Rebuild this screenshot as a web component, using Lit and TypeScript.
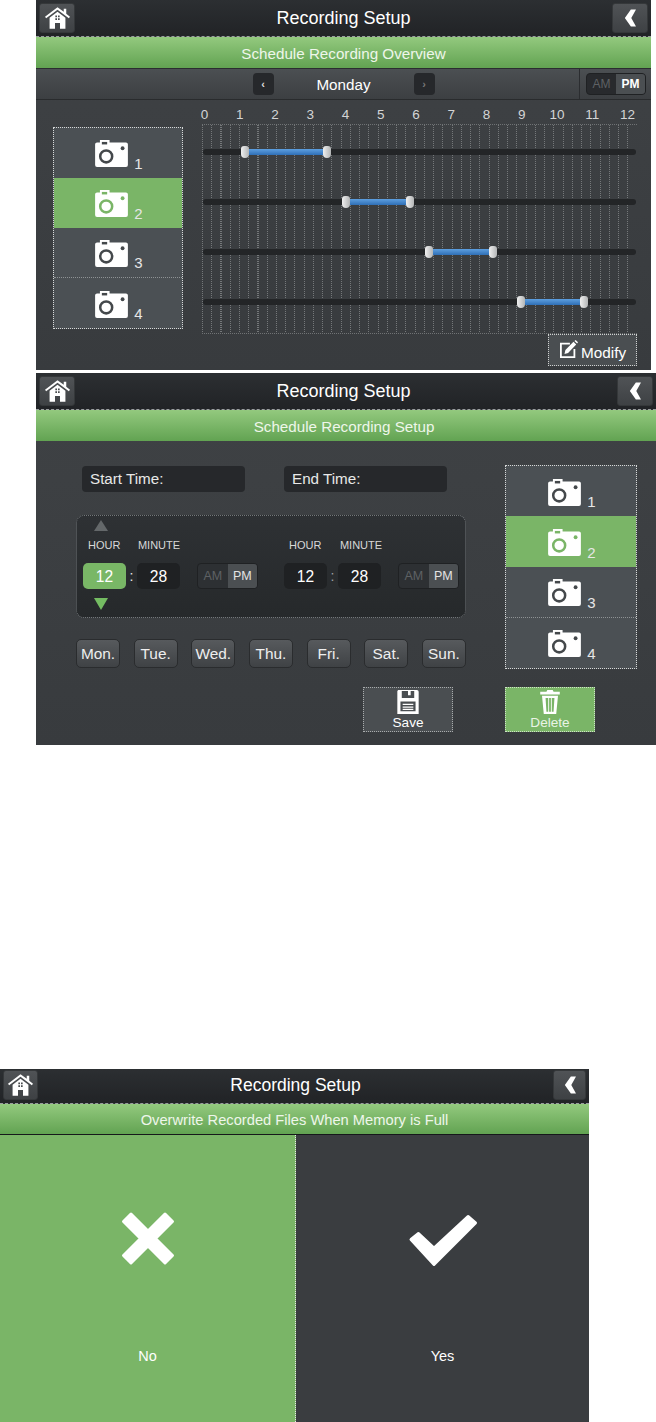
import { LitElement, html, css } from "lit";
import { customElement } from "lit/decorators.js";

const home = html`<svg class="ico-home" viewBox="0 0 30 26"><path fill="#fff" d="M15 0 L22.5 5.6 V2 H25.5 V8 L30 11.6 L28.6 13.4 L15 3.2 L1.4 13.4 L0 11.6 Z"/><path fill="#fff" fill-rule="evenodd" d="M15 5.6 L24.5 12.6 V26 H18 V19 H12 V26 H5.5 V12.6 Z M12.4 10 V12.2 H14.4 V10 Z M15.6 10 V12.2 H17.6 V10 Z M12.4 13.2 V15.4 H14.4 V13.2 Z M15.6 13.2 V15.4 H17.6 V13.2 Z"/></svg>`;
const backIco = html`<svg class="ico-back" viewBox="0 0 14 20"><path fill="#fff" d="M8 0 H14 L8.5 10 L14 20 H8 L1 10 Z"/></svg>`;
const camera = (sel: boolean) => {
  const c = sel ? "#7ab567" : "#44484b";
  return html`<svg class="ico-cam" viewBox="0 0 34 28"><path fill="#fff" d="M5 0 H15 V2.5 H32 Q34 2.5 34 4.5 V26 Q34 28 32 28 H2 Q0 28 0 26 V4.5 Q0 2.5 2 2.5 H5 Z"/><rect x="7" y="2" width="5.5" height="2.6" fill="${c}"/><circle cx="11.5" cy="17" r="6.2" fill="none" stroke="${c}" stroke-width="2.6"/><circle cx="28.5" cy="8.5" r="2" fill="${c}"/></svg>`;
};
const modifyIco = html`<svg class="ico-mod" viewBox="0 0 20 20"><path fill="none" stroke="#fff" stroke-width="2" d="M16 10 V19 H1 V4 H11"/><path fill="#fff" d="M5 15.5 L6 11 L15 2 L18 5 L9 14.5 Z M16 1 L17.4 0 L20 2.6 L19 4 Z"/></svg>`;
const saveIco = html`<svg class="ico-act" viewBox="0 0 24 27"><path fill="#fff" fill-rule="evenodd" d="M1 0 H22 Q24 0 24 2 V27 H0 V1 Z M5 1 V9 H19 V1 H15 V6 H12 V1 Z M3.5 13 V24 H20.5 V13 Z"/><path fill="#fff" d="M6 15.5 H18 V17 H6 Z M6 18.5 H18 V20 H6 Z M6 21 H18 V22.5 H6 Z"/></svg>`;
const trashIco = html`<svg class="ico-act" viewBox="0 0 22 27"><path fill="#fff" fill-rule="evenodd" d="M8 0 H14 L15 2 H22 V5 H0 V2 H7 Z M2 6.5 H20 L18 27 H4 Z M6 9 L7 24.5 H9 V9 Z M10 9 V24.5 H12 V9 Z M13 9 V24.5 H15 L16 9 Z"/></svg>`;

const cams = [1, 2, 3, 4];
const bars: [number, number][] = [[245, 327], [346, 410], [429, 493], [521, 584]];
const hours = [0, 1, 2, 3, 4, 5, 6, 7, 8, 9, 10, 11, 12];
const days = ["Mon.", "Tue.", "Wed.", "Thu.", "Fri.", "Sat.", "Sun."];

@customElement("app-root")
export class AppRoot extends LitElement {
  static styles = css`
    :host { display: block; width: 656px; height: 1422px; background: #fff; overflow: hidden;
      font-family: "Liberation Sans", Arial, sans-serif; color: #fff; }
    * { box-sizing: border-box; }
    svg { display: block; }

    .screen { background: linear-gradient(#3f4245, #383b3e); display: flex; flex-direction: column; }
    .s1 { margin-left: 36px; width: 615px; height: 370px; }
    .s2 { margin: 3px 0 0 36px; width: 620px; height: 372px; }
    .s3 { margin-top: 324px; width: 589px; height: 353px; }

    .bar { height: 37px; padding: 3px 3px 0; background: linear-gradient(#2c2f32, #212326);
      display: grid; grid-template-columns: auto 1fr auto; border-bottom: 1px dashed #9a9d9f; flex: none; }
    .s3 .bar { height: 35px; padding: 1px 3px 0; }
    .btn { width: 36px; height: 30px; border-radius: 3px; background: linear-gradient(#505356, #3e4144);
      border: 1px solid #35383a; display: flex; align-items: center; justify-content: center; }
    .s3 .btn { width: 35px; }
    .s3 .btn.back { width: 33px; }
    .ico-home { width: 25px; height: 22px; }
    .ico-back { width: 12px; height: 18px; }
    .title { font-size: 18px; text-align: center; line-height: 31px; }
    .s2 .title { padding-right: 5px; }
    .s3 .title { font-size: 17.5px; }

    .green { height: 32px; flex: none; background: linear-gradient(#93c97e, #62a352); border-bottom: 1px solid #2b2e30;
      text-align: center; font-size: 15.2px; line-height: 33px; color: #eef6ea; }
    .s2 .green { height: 31px; padding-right: 4px; border-bottom: 0; }
    .s3 .green { height: 31px; font-size: 14.7px; border-bottom: 1px solid #15181a; }

    .sub { height: 31px; flex: none; background: linear-gradient(#4b4f52, #3c3f42); border-bottom: 1px solid #292b2d;
      display: grid; grid-template-columns: 1fr 72px; }
    .nav { display: flex; align-items: center; justify-content: center; padding-left: 72px; }
    .nav .day { width: 140px; text-align: center; font-size: 15.2px; }
    .arrow { width: 21px; height: 22px; border-radius: 4px; background: #26282b; display: flex;
      align-items: center; justify-content: center; font-size: 11px; font-weight: bold; color: #ddd; }
    .arrow.dim { color: #777; }
    .ampm-wrap { border-left: 1px solid #2b2d30; padding: 4px 0 0 6px; }
    .ampm { width: 60px; height: 22px; display: flex; border-radius: 4px; overflow: hidden; background: #282a2d;
      border: 1px solid #1f2123; font-size: 12px; }
    .ampm span { flex: 1; display: flex; align-items: center; justify-content: center; color: #5e6164; }
    .ampm span.on { color: #fff; background: #4b4f52; }
    .s1 .ampm span.on { font-weight: bold; }
    .s2 .ampm { height: 26px; width: 61px; font-size: 12.5px; background: #2d3033; }
    .s2 .ampm span.on { color: #e4e4e4; }

    .ov { flex: 1; display: grid; grid-template-columns: 130px 435px; column-gap: 19px; padding: 8px 0 0 17px; }
    .cams { border: 1px dotted #d6d8d8; display: flex; flex-direction: column; background: #4b5054; align-self: start; }
    .s1 .cams { margin-top: 19px; height: 202px; }
    .s2 .cams { width: 132px; height: 204px; }
    .cam { flex: 1; display: flex; align-items: center; justify-content: center; padding: 2px 0 0 2px; gap: 6px;
      font-size: 15px; color: #e6e6e6; }
    .cam + .cam { border-top: 1px dotted #8e9294; }
    .cam.sel { background: #7ab567; border-top: 0; }
    .cam.sel + .cam { border-top: 0; }
    .cam b { font-weight: normal; align-self: flex-end; margin-bottom: 6px; }
    .ico-cam { width: 33px; height: 27px; }

    .tl { display: flex; flex-direction: column; }
    .hours { display: grid; grid-template-columns: repeat(13, 35.25px); margin-left: -15px; font-size: 13.5px; line-height: 14px;
      text-align: center; color: #d4d5d6; height: 16px; }
    .grid { position: relative; height: 210px; border-top: 1px dotted #6f7274; border-bottom: 1px dotted #6f7274;
      padding-top: 24px; display: flex; flex-direction: column; gap: 44px; }
    .grid::before { content: ""; position: absolute; inset: 0;
      background: repeating-linear-gradient(90deg, #75787a 0 1px, transparent 1px 9.25px);
      -webkit-mask-image: repeating-linear-gradient(#000 0 1px, transparent 1px 2px);
      mask-image: repeating-linear-gradient(#000 0 1px, transparent 1px 2px); }
    .track { position: relative; height: 6px; margin: 0 1px; border-radius: 3px; background: #232527; }
    .fill { position: absolute; top: 0; height: 6px; background: linear-gradient(#5d9fe0, #2f6fb6); }
    .thumb { position: absolute; top: -3px; width: 8px; height: 12px; border-radius: 3px 3px 4px 4px; margin-left: -4px;
      background: linear-gradient(90deg, #f0f0f0, #b3b5b6); }

    .foot { height: 37px; flex: none; display: flex; justify-content: flex-end; padding: 0 14px 4px 0; }
    .modify { width: 89px; height: 32px; border: 1px dotted #cfd1d1; background: #4a4e51; display: flex; align-items: center;
      gap: 3px; padding-left: 11px; font-size: 15.3px; }
    .modify span { margin-top: 6px; }
    .ico-mod { width: 18px; height: 18px; margin-top: -3px; }

    .setup { flex: 1; display: grid; grid-template-columns: 390px 132px; column-gap: 39px; padding: 24px 0 0 40px; align-content: start; }
    .left { display: flex; flex-direction: column; }
    .fields { display: flex; gap: 39px; padding-left: 6px; height: 26px; margin-top: 1px; }
    .field { width: 163px; height: 26px; background: #26282b; border-radius: 4px; font-size: 15.2px; line-height: 26px; padding-left: 8px;
      color: #e8e8e8; }
    .clock { height: 103px; margin-top: 23px; border-radius: 8px; border: 1px dotted #73777a; background: linear-gradient(#2e3134, #26292b);
      padding: 4px 0 0 6px; }
    .tri-up { width: 0; border: 7px solid transparent; border-top: 0; border-bottom: 11px solid #64686a; margin-left: 11px; }
    .tri-down { width: 0; border: 7px solid transparent; border-bottom: 0; border-top: 12px solid #74bc62; margin: 9px 0 0 11px; }
    .labels { display: grid; grid-template-columns: 54px 44px 103px 55px 44px; font-size: 11px; line-height: 14px; margin-top: 7px; color: #d8d8d8; height: 14px; }
    .labels span { text-align: center; }
    .labels .l { text-align: left; padding-left: 5px; }
    .vals { display: flex; align-items: center; margin-top: 11px; height: 26px; }
    .val { width: 43px; height: 26px; background: #1f2123; border-radius: 5px; text-align: center; font-size: 15.6px; line-height: 27px; }
    .val.sel { background: #79b766; }
    .colon { width: 11px; text-align: center; font-size: 14px; color: #e8e8e8; }
    .colon.dim { color: #9fa2a4; }
    .vals .ampm { margin-left: 17px; }
    .vals .gap { width: 26px; }
    .days { display: flex; justify-content: space-between; margin-top: 21px; }
    .dbtn { width: 44px; height: 29px; border-radius: 5px; border: 1px solid #2a2c2e; background: linear-gradient(#575a5d, #3f4245);
      font-size: 15.4px; text-align: center; line-height: 27px; color: #eee; }
    .acts { display: flex; gap: 52px; padding-left: 287px; grid-column: 1 / 3; margin-top: 18px; }
    .act { width: 90px; height: 45px; border: 1px dotted #a9acad; background: #4a4e51; display: flex; flex-direction: column; align-items: center;
      font-size: 13.6px; line-height: 14px; padding-top: 2px; gap: 2px; }
    .act.sel { background: #7ab567; border-color: #cfe2c8; color: #e9f3e5; }
    .ico-act { width: 22px; height: 24px; }

    .choice { flex: 1; display: flex; }
    .opt { flex: 1; display: flex; flex-direction: column; align-items: center; font-size: 14.5px; background: #3a3d40; }
    .opt.sel { background: #7ab567; border-right: 1px dotted #e8e8e8; flex: 0 0 296px; }
    .opt svg { margin-top: 77px; height: 53px; overflow: visible; }
    .opt span { margin-top: 83px; line-height: 17px; }
  `;

  private topBar(title: string) {
    return html`<div class="bar"><div class="btn">${home}</div><div class="title">${title}</div><div class="btn back">${backIco}</div></div>`;
  }

  private camList() {
    return html`<div class="cams">${cams.map((n) => html`<div class="cam ${n === 2 ? "sel" : ""}">${camera(n === 2)}<b>${n}</b></div>`)}</div>`;
  }

  private ampm() {
    return html`<div class="ampm"><span>AM</span><span class="on">PM</span></div>`;
  }

  render() {
    return html`
      <section class="screen s1">
        ${this.topBar("Recording Setup")}
        <div class="green">Schedule Recording Overview</div>
        <div class="sub">
          <div class="nav"><div class="arrow">‹</div><div class="day">Monday</div><div class="arrow dim">›</div></div>
          <div class="ampm-wrap">${this.ampm()}</div>
        </div>
        <div class="ov">
          ${this.camList()}
          <div class="tl">
            <div class="hours">${hours.map((h) => html`<span>${h}</span>`)}</div>
            <div class="grid">
              ${bars.map(([a, b]) => html`<div class="track">
                <div class="fill" style="left:${a - 203}px;width:${b - a}px"></div>
                <div class="thumb" style="left:${a - 203}px"></div>
                <div class="thumb" style="left:${b - 203}px"></div>
              </div>`)}
            </div>
          </div>
        </div>
        <div class="foot"><div class="modify">${modifyIco}<span>Modify</span></div></div>
      </section>

      <section class="screen s2">
        ${this.topBar("Recording Setup")}
        <div class="green">Schedule Recording Setup</div>
        <div class="setup">
          <div class="left">
            <div class="fields"><div class="field">Start Time:</div><div class="field">End Time:</div></div>
            <div class="clock">
              <div class="tri-up"></div>
              <div class="labels"><span class="l">HOUR</span><span>MINUTE</span><span></span><span class="l">HOUR</span><span>MINUTE</span></div>
              <div class="vals">
                <div class="val sel">12</div><div class="colon">:</div><div class="val">28</div>${this.ampm()}
                <div class="gap"></div>
                <div class="val">12</div><div class="colon dim">:</div><div class="val">28</div>${this.ampm()}
              </div>
              <div class="tri-down"></div>
            </div>
            <div class="days">${days.map((d) => html`<div class="dbtn">${d}</div>`)}</div>
          </div>
          ${this.camList()}
          <div class="acts">
            <div class="act">${saveIco}<span>Save</span></div>
            <div class="act sel">${trashIco}<span>Delete</span></div>
          </div>
        </div>
      </section>

      <section class="screen s3">
        ${this.topBar("Recording Setup")}
        <div class="green">Overwrite Recorded Files When Memory is Full</div>
        <div class="choice">
          <div class="opt sel">
            <svg width="52" viewBox="0 0 52 53"><path fill="#fff" stroke="#fff" stroke-width="3" stroke-linejoin="round" d="M9 2 L26 19 L43 2 L50.5 9.5 L33.5 26.5 L50.5 43.5 L43 51 L26 34 L9 51 L1.5 43.5 L18.5 26.5 L1.5 9.5 Z"/></svg>
            <span>No</span>
          </div>
          <div class="opt">
            <svg width="68" viewBox="0 0 68 53"><path fill="#fff" stroke="#fff" stroke-width="3" stroke-linejoin="round" d="M2 27.5 L9.5 21.5 L25 36 L59 4.5 L66.5 11 L25 52.5 Z"/></svg>
            <span>Yes</span>
          </div>
        </div>
      </section>
    `;
  }
}
